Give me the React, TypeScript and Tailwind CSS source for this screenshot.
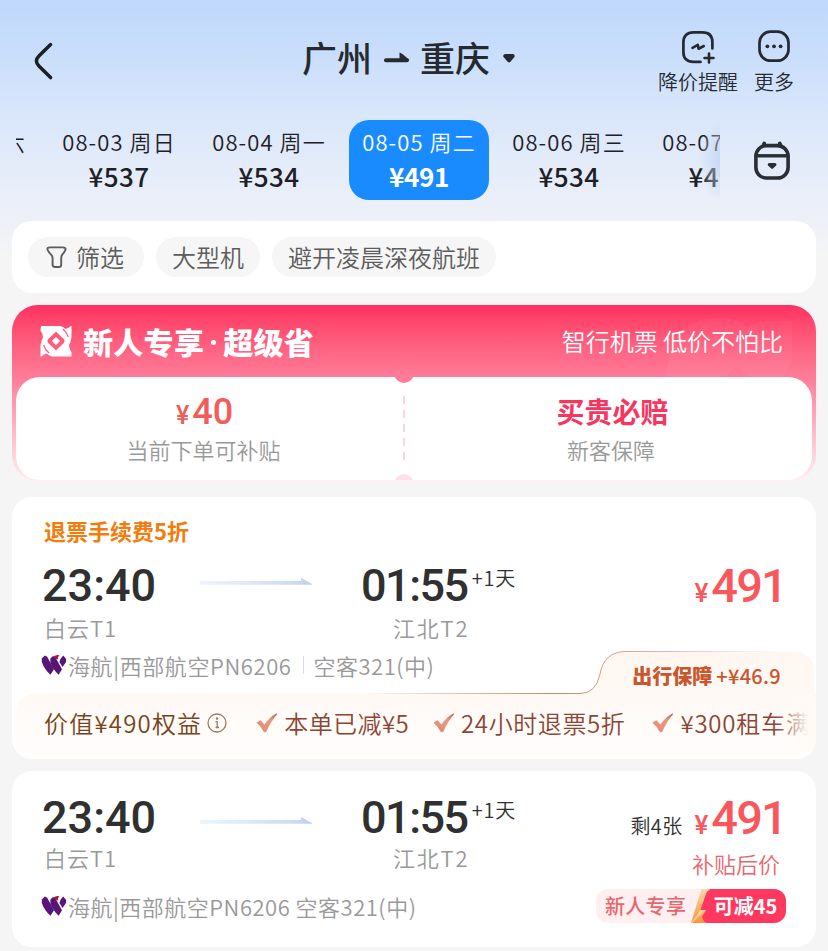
import { useId, type ReactNode } from "react";
import clsx from "clsx";

interface DateItem {
  date: string;
  day: string;
  price: number;
}

const DATES: DateItem[] = [
  { date: "08-02", day: "周六", price: 537 },
  { date: "08-03", day: "周日", price: 537 },
  { date: "08-04", day: "周一", price: 534 },
  { date: "08-05", day: "周二", price: 491 },
  { date: "08-06", day: "周三", price: 534 },
  { date: "08-07", day: "周四", price: 491 },
];

const SELECTED = "08-05";

// Body copy is set in DemiLight; anything heavier needs the full family,
// otherwise the browser fakes the bold.
const BODY_FONT = "font-['Noto_Sans_CJK_SC_DemiLight','Noto_Sans_CJK_SC',sans-serif]";
const HEAVY_FONT = "font-['Noto_Sans_CJK_SC',sans-serif]";

function BackIcon() {
  return (
    <svg width="24" height="40" viewBox="0 0 24 40" fill="none" className="shrink-0">
      <path
        d="M18.6 3.6 L7.4 14.4 Q1.4 20 7.4 25.6 L18.6 36.6"
        stroke="#1c1f24"
        strokeWidth="3.5"
        strokeLinecap="round"
        strokeLinejoin="round"
      />
    </svg>
  );
}

function AlertIcon() {
  return (
    <svg width="36" height="36" viewBox="0 0 36 36" fill="none" stroke="#262a30" strokeWidth="2.7" strokeLinecap="round">
      <path d="M20.5 32.9 H13.5 Q3.4 32.9 3.4 22.9 V13.5 Q3.4 3.4 13.5 3.4 H22.5 Q32.4 3.4 32.4 13.5 V19.5" />
      <path d="M12.5 18.8 L17.8 15.8 L18.6 19.8 L23.8 17" strokeWidth="2.6" strokeLinejoin="round" />
      <path d="M29 24.5 V33.5 M24.5 29 H33.5" strokeWidth="2.6" />
    </svg>
  );
}

function MoreIcon() {
  return (
    <svg width="36" height="36" viewBox="0 0 36 36" fill="none">
      <rect x="3.5" y="2.7" width="29" height="29" rx="11" stroke="#262a30" strokeWidth="2.7" />
      <circle cx="11.4" cy="17.3" r="1.9" fill="#262a30" />
      <circle cx="18" cy="17.3" r="1.9" fill="#262a30" />
      <circle cx="24.6" cy="17.3" r="1.9" fill="#262a30" />
    </svg>
  );
}

function CalendarIcon() {
  return (
    <svg width="40" height="44" viewBox="0 0 40 44" fill="none" stroke="#2a2d33">
      <rect x="3.9" y="6.6" width="32.2" height="32.4" rx="10.5" strokeWidth="3.6" />
      <path d="M4 16.8 H36" strokeWidth="3.4" />
      <path d="M11.6 5.8 L12.2 4.4 M28.4 5.8 L27.8 4.4" strokeWidth="3.6" strokeLinecap="round" />
      <path d="M17.3 25.6 H22.9 L20.1 28.2 Z" fill="#2a2d33" strokeWidth="3.2" strokeLinejoin="round" />
    </svg>
  );
}

function FilterIcon() {
  return (
    <svg width="24" height="24" viewBox="0 0 24 24" fill="none" stroke="#5c5c5c" strokeWidth="1.9" strokeLinejoin="round">
      <path d="M6 2.4 H18.6 Q22.5 2.4 21.3 5.2 Q20.4 7.3 18.6 9.2 Q17.2 10.8 17.2 13 V19.4 Q17.2 22 14.8 22 H11.4 Q8.6 22 8.6 19.4 V13 Q8.6 11 6.9 9.3 Q4.6 7 3.6 4.8 Q2.7 2.4 6 2.4 Z" />
    </svg>
  );
}

function PromoLogo() {
  return (
    <svg width="34" height="34" viewBox="0 0 34 34" fill="#fff">
      <path
        fillRule="evenodd"
        d="M2 2 H21 Q24 2.8 26.5 4.8 Q29.2 4.5 31.8 2 H32.5 V13 Q32 18 30 21 Q30.5 26 32.5 28 V32.5 H13 Q10 31.5 7.5 29.5 Q5 30 2.5 32.5 H1.5 V21.5 Q2 17 4 13.5 Q3.5 9 1.5 6.8 Z M17 7.8 L9.2 15 Q7.5 17 9.2 19 L17 26.6 L24.8 19 Q26.5 17 24.8 15 Z"
      />
      <path d="M17 13.4 L20.6 17 L17 20.6 L13.4 17 Z" stroke="#fff" strokeLinejoin="round" />
      <path d="M24 5 Q28 8.5 29.4 13 M10 29 Q6 25.5 4.6 21" fill="none" stroke="#ff5e80" strokeWidth="1.2" />
    </svg>
  );
}

function AirlineLogo() {
  return (
    <svg width="26" height="22" viewBox="0 0 26 22" className="shrink-0">
      <path d="M.8 4.6 L3.8 1.6 L6.2 2.8 L13 15.2 L9.4 20.8 Q3.5 15.5 .8 8 Z" fill="#571677" />
      <path d="M9.4 4.6 L12 2 L14.2 3 L21 15.2 L17.6 20.8 Q12 15.5 9.4 8.5 Z" fill="#571677" />
      <path d="M19.4 5 L22.2 1.6 L25.2 5 L25 8 L21.6 13 L18.4 8 Z" fill="#571677" />
      <path d="M12.8 2.4 Q15 .2 18.5 1.2 L17 3 L17.2 5.6 Q15 5 12.8 2.4 Z" fill="#b3152c" />
    </svg>
  );
}

function RouteArrow() {
  const id = useId();
  return (
    <svg width="112" height="10" viewBox="0 0 112 10">
      <defs>
        <linearGradient id={id} x1="0" x2="1">
          <stop offset="0" stopColor="#edf4fd" />
          <stop offset=".8" stopColor="#cfddf3" />
          <stop offset="1" stopColor="#c0cfea" />
        </linearGradient>
      </defs>
      <path d="M0 4 H101 V.8 Q106 4 112 7 V7.8 H0 Z" fill={`url(#${id})`} />
    </svg>
  );
}

function Check() {
  const id = useId();
  return (
    <svg width="22" height="20" viewBox="0 0 22 20" className="shrink-0">
      <defs>
        <linearGradient id={id} x1="1" y1="0" x2="0" y2="1">
          <stop offset="0" stopColor="#b06a55" />
          <stop offset=".35" stopColor="#e89a80" />
          <stop offset="1" stopColor="#e28a70" />
        </linearGradient>
      </defs>
      <path d="M.5 9.4 L4.6 7.2 L8.4 11.6 Q13 4.5 20.6 .3 L21.2 1.2 Q14.5 8.5 10.2 19 L8 19.2 Q5 13.5 .5 9.4 Z" fill={`url(#${id})`} />
    </svg>
  );
}

function Header() {
  return (
    <header className="flex h-[120px] items-start pl-[32px] pr-[34px] text-[#262a30]">
      <div className="w-[270px] pt-[41px]">
        <BackIcon />
      </div>
      <h1 className={clsx("flex h-[115px] items-center text-[35px] font-medium", HEAVY_FONT)}>
        <span>广州</span>
        <svg width="26" height="16" viewBox="0 0 26 16" className="ml-3">
          <path d="M2 10.3 H23" stroke="#262a30" strokeWidth="4" strokeLinecap="round" />
          <path d="M15.5 2.6 Q16.5 2.2 25.4 10 H15.5 Z" fill="#262a30" />
        </svg>
        <span className="ml-[10px]">重庆</span>
        <svg width="14" height="14" viewBox="0 0 14 14" className="ml-3">
          <path d="M3.2 5 H10.8 L7 9.4 Z" fill="#262a30" stroke="#262a30" strokeWidth="3.8" strokeLinejoin="round" />
        </svg>
      </h1>
      <div className="ml-auto flex gap-4 pt-[29px] text-[20px] leading-[30px]">
        <div className="flex flex-col items-center">
          <AlertIcon />
          <span className="mt-0.5">降价提醒</span>
        </div>
        <div className="flex flex-col items-center">
          <MoreIcon />
          <span className="mt-0.5">更多</span>
        </div>
      </div>
    </header>
  );
}

function DateStrip() {
  return (
    <div className="flex h-[101px] items-start pl-4">
      <div className="relative w-[704px] overflow-hidden">
        <div className="-ml-[122px] flex">
          {DATES.map((d) => (
            <div key={d.date} className="w-[150px] shrink-0 px-[5px]">
              <div
                className={clsx(
                  "flex h-20 flex-col items-center rounded-[20px] pt-[6px]",
                  d.date === SELECTED ? "bg-[#1a8bff] text-white" : "text-[#1d2026]",
                )}
              >
                <span className="whitespace-nowrap text-[22px] leading-[30px] tracking-[1.1px]">
                  {d.date} {d.day}
                </span>
                <span
                  className={clsx(
                    "mt-[3px] text-[26px] leading-[34px]",
                    HEAVY_FONT,
                    d.date === SELECTED ? "font-bold tracking-[-0.4px]" : "font-medium tracking-[0.4px]",
                  )}
                >
                  ¥{d.price}
                </span>
              </div>
            </div>
          ))}
        </div>
        <div className="absolute inset-y-0 right-0 w-5 bg-[radial-gradient(ellipse_at_right,rgba(186,206,240,0.65)_0%,rgba(200,216,242,0.35)_50%,transparent_72%)]" />
      </div>
      <div className="ml-8 mt-[19px]">
        <CalendarIcon />
      </div>
    </div>
  );
}

function Chip({ children, className }: { children: ReactNode; className?: string }) {
  return (
    <div
      className={clsx(
        "flex h-10 items-center rounded-[20px] bg-[#f6f6f6] pl-4 text-[24px] leading-10 text-[#5c5c5c]",
        className ?? "pr-4",
      )}
    >
      {children}
    </div>
  );
}

function PromoCard() {
  return (
    <section className="relative mt-3 h-44 overflow-hidden rounded-[26px] bg-linear-to-b from-[#ff2f60] via-[#ff7b98] via-41% to-[#ffeef2] px-1">
      {/* faint logo watermark behind the slogan */}
      <svg width="140" height="60" viewBox="0 0 140 60" className="absolute right-[20px] top-[12px]">
        <path d="M10 60 Q14 8 50 2 Q80 -2 92 10 L104 4 H136 V42 L128 60 H90 Q84 40 70 60 Z" fill="#fff" opacity=".045" />
      </svg>
      <div className="relative flex h-[72px] items-center pl-[23px] pr-[29px] text-white">
        <PromoLogo />
        <h2 className={clsx("ml-[10px] flex text-[30px] font-black leading-[40px] tracking-[0.3px]", HEAVY_FONT)}>
          <span>新人专享</span>
          <span className="mx-[7px] mt-[19px] size-[5px] rounded-full bg-white" />
          <span>超级省</span>
        </h2>
        <span className="ml-auto text-[24px]">智行机票 低价不怕比</span>
      </div>
      <div className="relative flex h-[103px] overflow-hidden rounded-[24px] bg-white text-center">
        <div className="w-[387px] pr-3 pt-[14px]">
          <p className="flex h-[42px] items-baseline justify-center pl-[2px] font-['Roboto',sans-serif] font-medium leading-[42px] text-[#f25c5a]">
            <span className="text-[25px] leading-none">¥</span>
            <span className="ml-[3px] text-[36px] leading-[42px]">40</span>
          </p>
          <p className="text-[22px] leading-[32px] text-[#999]">当前下单可补贴</p>
        </div>
        <div className="mt-[19px] h-[66px] w-0.5 bg-[repeating-linear-gradient(to_bottom,#ffd3dd_0_8px,transparent_8px_14px)]" />
        <div className="flex-1 pl-[8px] pt-[13px]">
          <p className={clsx("text-[28px] font-bold leading-[42px] text-[#f8355f]", HEAVY_FONT)}>买贵必赔</p>
          <p className="-ml-[3px] mt-px text-[22px] leading-[32px] text-[#999]">新客保障</p>
        </div>
        <span className="absolute -top-[14px] left-[378px] size-5 rounded-full bg-[#ff7b98]" />
        <span className="absolute -bottom-[14px] left-[378px] size-5 rounded-full bg-[#ffe0e8]" />
      </div>
    </section>
  );
}

function FlightTimes({ price, left }: { price: number; left?: string }) {
  return (
    <div className="flex h-[46px] items-center font-['Roboto',sans-serif] text-[#303030]">
      <span className="w-[158px] text-[45px] font-medium leading-[46px]">23:40</span>
      <div className={clsx("w-[161px]", left ? "pt-[5px]" : "pb-[9px]")}>
        <RouteArrow />
      </div>
      <span className="text-[45px] font-medium leading-[46px] tracking-[-1.5px]">01:55</span>
      <span className={clsx("ml-[4px] self-start text-[20px] leading-[30px] tracking-[0.8px]", BODY_FONT)}>+1天</span>
      <div className="-mr-0.5 ml-auto flex items-baseline pt-[6px]">
        {left && <span className={clsx("mr-3 text-[20px] leading-[30px] tracking-[0.3px]", BODY_FONT)}>{left}</span>}
        <span className="text-[26px] font-medium leading-[46px] text-[#f9575c]">¥</span>
        <span className="ml-[3px] text-[47px] font-medium leading-[46px] tracking-[-1.8px] text-[#f9575c]">{price}</span>
      </div>
    </div>
  );
}

function Airports() {
  return (
    <div className="flex text-[22px] leading-8 text-[#999]">
      <span className="w-[349px] tracking-[1px]">白云T1</span>
      <span className="tracking-[1.8px]">江北T2</span>
    </div>
  );
}

function BenefitPanel() {
  return (
    <div className="relative h-[110px]">
      <svg width="804" height="110" viewBox="0 0 804 110" fill="none" className="absolute left-0 top-0">
        <defs>
          <linearGradient id="benefit-fill" x1="0" y1="0" x2="0" y2="1">
            <stop offset="0" stopColor="#fff6f0" />
            <stop offset="1" stopColor="#fffefd" />
          </linearGradient>
          <linearGradient id="benefit-edge" gradientUnits="userSpaceOnUse" x1="350" y1="0" x2="770" y2="0">
            <stop offset="0" stopColor="#c98670" stopOpacity="0" />
            <stop offset=".45" stopColor="#c98670" />
            <stop offset=".7" stopColor="#dcb5a6" />
            <stop offset="1" stopColor="#e8c8ba" stopOpacity="0" />
          </linearGradient>
        </defs>
        <path d="M4 62 Q6 43.5 24 43.5 H568 Q584 43.5 588 24 Q592 1.5 614 1.5 H780 Q800 1.5 802 20 V110 H4 Z" fill="url(#benefit-fill)" />
        <path d="M350 43.5 H568 Q584 43.5 588 24 Q592 1.5 614 1.5 H780" stroke="url(#benefit-edge)" />
      </svg>
      <div
        className={clsx(
          "relative flex h-[44px] items-center justify-end pr-[35px] pt-2 text-[20px] text-[#c9562c]",
          HEAVY_FONT,
        )}
      >
        <b className="font-black">出行保障</b>
        <span className="ml-[4px] font-medium tracking-[0.3px]">+¥46.9</span>
      </div>
      <div className="relative flex h-[58px] items-center overflow-hidden whitespace-nowrap pl-8 text-[24px] leading-[36px] text-[#8c4534]">
        <span className="tracking-[1.2px] text-[#77441a]">价值¥490权益</span>
        <svg width="20" height="20" viewBox="0 0 20 20" fill="none" stroke="#9b7a63" strokeWidth="1.3" className="ml-[5px] shrink-0">
          <circle cx="10" cy="10" r="9" />
          <path d="M8.5 8.6 H10.2 V14.5 M8.5 14.5 H12" />
          <circle cx="10" cy="5.6" r=".6" fill="#9b7a63" />
        </svg>
        <span className="ml-[29px] flex items-center gap-[6px] tracking-[0.4px]">
          <Check />
          本单已减¥5
        </span>
        <span className="ml-[24px] flex items-center gap-[6px] tracking-[0.6px]">
          <Check />
          24小时退票5折
        </span>
        <span className="ml-[27px] flex items-center gap-[6px] tracking-[0.8px]">
          <Check />
          ¥300租车满减
        </span>
        <div className="absolute inset-y-0 right-0 w-2 bg-[#fffaf6]" />
        <div className="absolute inset-y-0 right-2 w-8 bg-linear-to-r from-transparent to-[#fffaf6]" />
      </div>
    </div>
  );
}

function NewcomerBadge() {
  return (
    <div
      className={clsx(
        "flex h-[34px] overflow-hidden rounded-[12px] bg-[#ffeff1] text-[20px] leading-[34px]",
        HEAVY_FONT,
      )}
    >
      <span className="w-[95px] pl-[9px] font-medium tracking-[0.3px] text-[#e5676e]">新人专享</span>
      <svg width="22" height="34" viewBox="0 0 22 34" className="shrink-0">
        <defs>
          <linearGradient id="bolt" x1="0" y1="0" x2="0" y2="1">
            <stop offset="0" stopColor="#fbd9aa" />
            <stop offset="1" stopColor="#f8953e" />
          </linearGradient>
        </defs>
        <path d="M22 0 H19 Q15 1 13 8 L8 22 L13 34 H22 Z" fill="#ff385f" />
        <path d="M10.5 0 H19 Q16 2 14.5 6 L9.5 21 H15 L11 28 Q12 32 15.5 34 H0 Z" fill="url(#bolt)" />
        <path d="M9.5 21 H15 L1 34 H0 Z" fill="#ffc993" />
      </svg>
      <span className="w-[73px] bg-[#ff385f] pr-2 text-center font-bold text-white">可减45</span>
    </div>
  );
}

export default function App() {
  return (
    <div
      className={clsx(
        "h-[951px] w-[828px] overflow-hidden bg-[linear-gradient(to_bottom,#bfd8fc_0px,#cbdffb_60px,#dae7fa_120px,#ebeff9_200px,#edf0f8_220px,#f5f5f5_255px)] font-[350]",
        BODY_FONT,
      )}
    >
      <Header />
      <DateStrip />
      <main className="px-3">
        <section className="flex h-[72px] items-center gap-3 rounded-[20px] bg-white px-4">
          <Chip className="pr-5">
            <FilterIcon />
            <span className="ml-2">筛选</span>
          </Chip>
          <Chip>大型机</Chip>
          <Chip>避开凌晨深夜航班</Chip>
        </section>

        <PromoCard />

        <section className="mt-4 h-[262px] overflow-hidden rounded-[20px] bg-white pt-[17px]">
          <div className="px-8">
            <p className={clsx("text-[22px] font-bold leading-8 text-[#f27c0c]", HEAVY_FONT)}>退票手续费5折</p>
            <div className="-ml-0.5 mt-[17px]">
              <FlightTimes price={491} />
            </div>
            <div className="mt-[2px]">
              <Airports />
            </div>
          </div>
          <div className="relative z-10 -mb-[31px] mt-[6px] flex h-8 items-center pl-[29px] text-[22px] text-[#999]">
            <AirlineLogo />
            <span className="ml-px tracking-[0.6px]">海航|西部航空PN6206</span>
            <span className="ml-[11px] h-[18px] w-px bg-[#ddd]" />
            <span className="ml-[10px] tracking-[0.5px]">空客321(中)</span>
          </div>
          <div className="-mt-[2px]">
            <BenefitPanel />
          </div>
        </section>

        <section className="mt-3 h-44 rounded-[20px] bg-white px-8 pt-[24px]">
          <div className="-ml-0.5">
            <FlightTimes price={491} left="剩4张" />
          </div>
          <div className="flex">
            <Airports />
            <span className="ml-auto mr-1 mt-[6px] text-[22px] leading-8 text-[#e8666c]">补贴后价</span>
          </div>
          <div className="-ml-[3px] -mr-0.5 mt-[10px] flex h-[34px] items-center text-[22px] text-[#999]">
            <AirlineLogo />
            <span className="ml-px tracking-[0.5px]">海航|西部航空PN6206 空客321(中)</span>
            <div className="ml-auto">
              <NewcomerBadge />
            </div>
          </div>
        </section>
      </main>
    </div>
  );
}
